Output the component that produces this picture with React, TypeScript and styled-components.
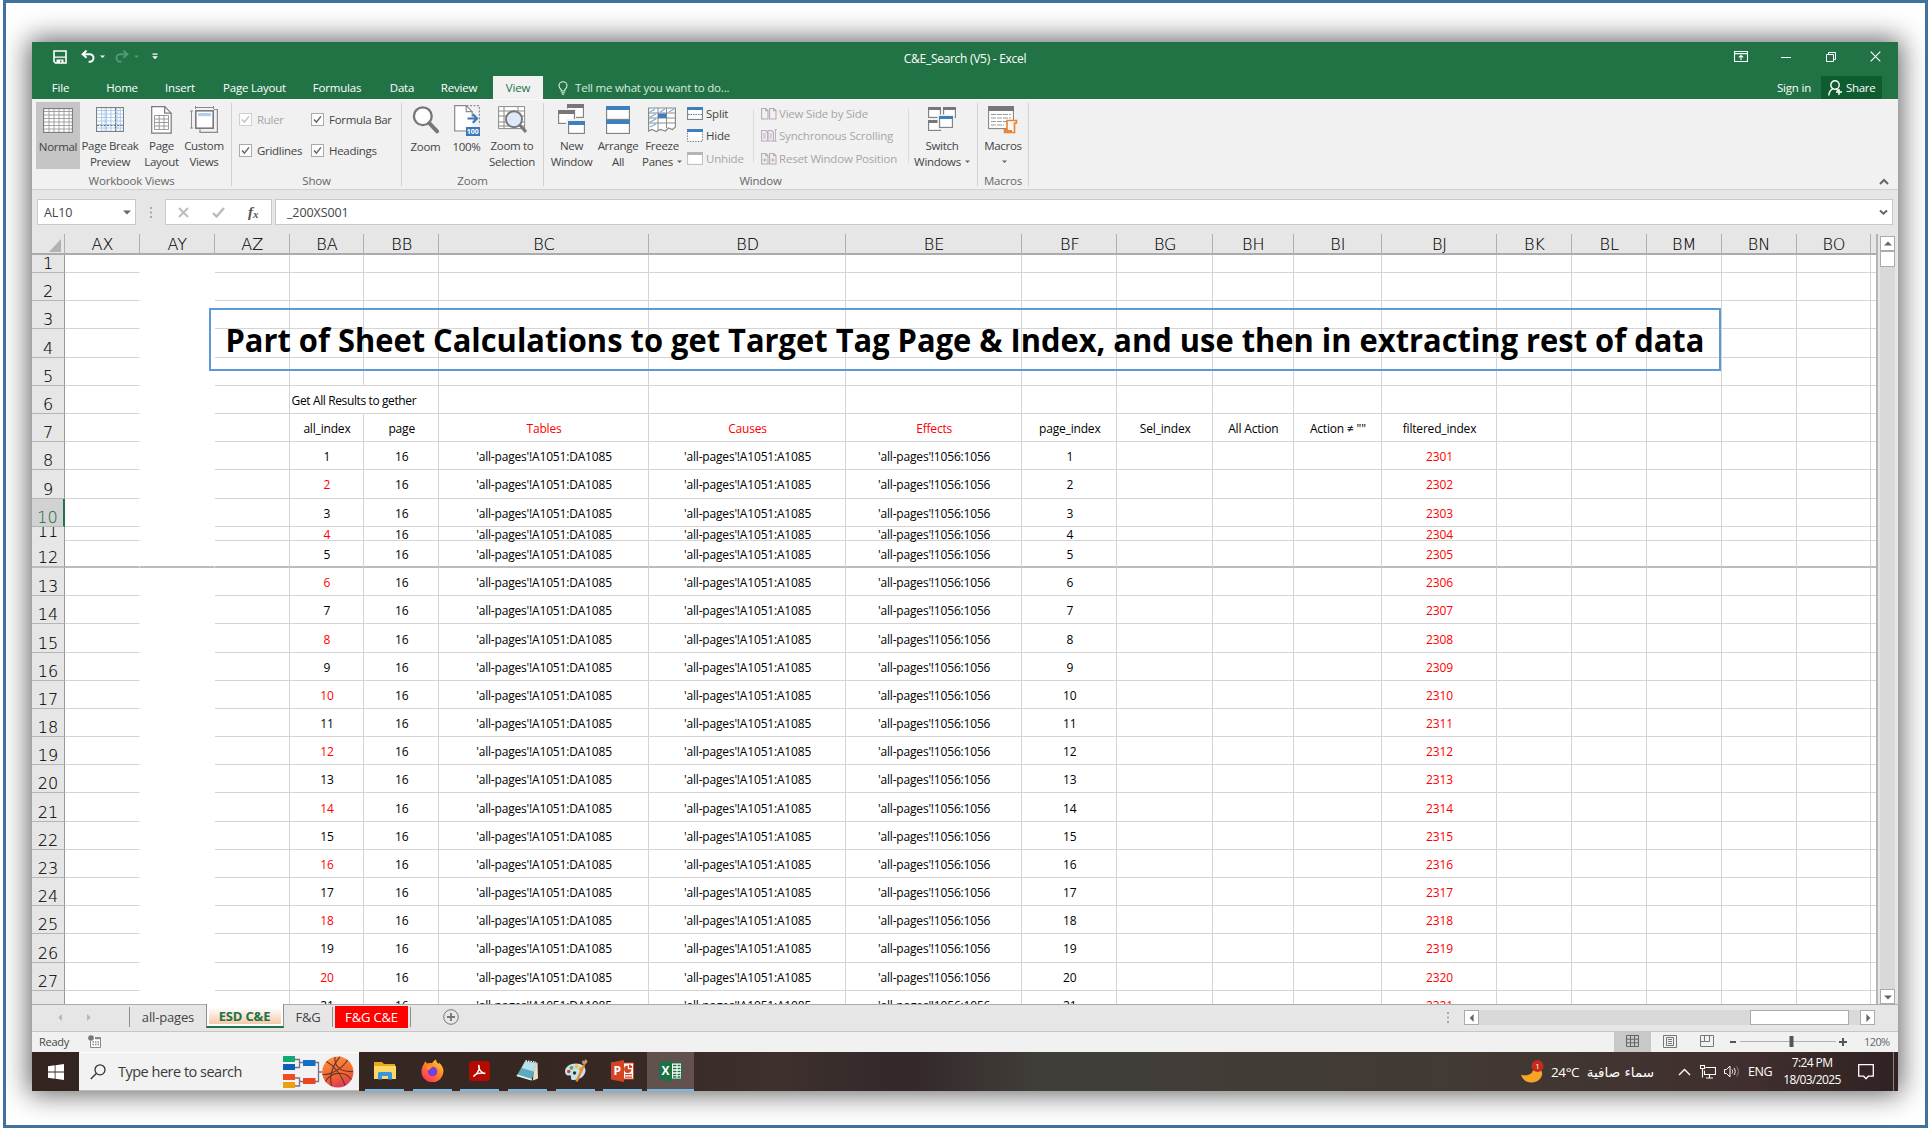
import React from 'react';
import styled, { createGlobalStyle, css } from 'styled-components';

const UI = "'Open Sans', 'Noto Sans', sans-serif";
const HEAD = "'DejaVu Sans', sans-serif";
const GREEN = '#217346';
const LINE = '#d4d4d4';

const Global = createGlobalStyle`
  * { box-sizing: border-box; }
  html, body { margin: 0; padding: 0; background: #fff; }
  body { font-family: ${UI}; overflow: hidden; }
  svg { display: block; flex: none; }
`;

const Frame = styled.div`
  width: 1925px;
  height: 1128px;
  margin-left: 3px;
  border: 3px solid #41719c;
  padding: 39px 0 0 26px;
  background: #fff;
  overflow: hidden;
`;

const Window = styled.div`
  width: 1866px;
  height: 1049px;
  display: flex;
  flex-direction: column;
  background: #e6e6e6;
  box-shadow: 0 0 26px 3px rgba(0, 0, 0, 0.62);
`;

/* ---------- title bar ---------- */

const TitleBar = styled.div`
  height: 34px;
  flex: none;
  display: grid;
  grid-template-columns: 1fr auto 1fr;
  align-items: start;
  background: ${GREEN};
  color: #fff;
`;
const QuickAccess = styled.div`
  display: flex;
  align-items: center;
  padding-left: 21px;
  height: 29px;
`;
const Gap = styled.span<{ w: number }>`
  flex: none;
  width: ${(p) => p.w}px;
`;
const DocTitle = styled.div`
  font-size: 12px;
  letter-spacing: -0.29px;
  line-height: 34px;
  white-space: nowrap;
`;
const WindowButtons = styled.div`
  display: flex;
  align-items: center;
  justify-content: flex-end;
  height: 29px;
  padding-right: 17px;
`;

/* ---------- ribbon tabs ---------- */

const TabRow = styled.div`
  height: 23px;
  flex: none;
  display: flex;
  align-items: stretch;
  background: ${GREEN};
  color: #fff;
`;
const RibbonTab = styled.div<{ w: number; $active?: boolean }>`
  width: ${(p) => p.w}px;
  text-align: center;
  font-size: 11.5px;
  letter-spacing: -0.2px;
  line-height: 23px;
  white-space: nowrap;
  ${(p) => p.$active && css`margin-left: 9px; background: #f1f1f1; color: ${GREEN};`}
`;
const TellMe = styled.div`
  display: flex;
  flex: 1;
  align-items: center;
  padding-left: 15px;
  gap: 7px;
  font-size: 11.5px;
  letter-spacing: -0.2px;
  color: #d9eadf;
`;
const SignIn = styled.div`
  font-size: 11.5px;
  letter-spacing: -0.2px;
  line-height: 23px;
  margin-right: 10px;
`;
const Share = styled.div`
  display: flex;
  align-items: center;
  gap: 3px;
  width: 61px;
  margin-right: 16px;
  padding-left: 7px;
  font-size: 11.5px;
  letter-spacing: -0.3px;
  background: #0e5c2f;
`;

/* ---------- ribbon ---------- */

const Ribbon = styled.div`
  height: 91px;
  flex: none;
  display: flex;
  padding-top: 3px;
  border-bottom: 1px solid #d2d2d2;
  border-top: 1px solid #fafafa;
  background: #f1f1f1;
  color: #444;
  font-size: 11.5px;
  letter-spacing: -0.3px;
`;
const Group = styled.div<{ w: number }>`
  width: ${(p) => p.w}px;
  height: 83px;
  display: flex;
  flex-direction: column;
  border-right: 1px solid #d2d2d2;
`;
const GroupBody = styled.div<{ pad?: number }>`
  display: flex;
  flex: 1;
  padding-left: ${(p) => p.pad || 0}px;
`;
const GroupLabel = styled.div`
  height: 14px;
  text-align: center;
  line-height: 17px;
  letter-spacing: -0.2px;
  color: #666;
`;
const BigButton = styled.div<{ w: number; $active?: boolean }>`
  width: ${(p) => p.w}px;
  height: 67px;
  margin-top: -1px;
  display: flex;
  flex-direction: column;
  align-items: center;
  background: ${(p) => (p.$active ? '#c5c5c5' : 'transparent')};
`;
const IconBox = styled.div`
  height: 37px;
  display: flex;
  align-items: center;
  padding-bottom: 1px;
`;
const BigLabel = styled.div`
  line-height: 15.4px;
  text-align: center;
  white-space: nowrap;
`;
const Checks = styled.div`
  display: grid;
  grid-template-columns: 72px auto;
  grid-template-rows: 31px 30px;
  padding: 1px 0 0 7px;
`;
const CheckItem = styled.div<{ $off?: boolean }>`
  display: flex;
  align-items: center;
  gap: 5px;
  white-space: nowrap;
  color: ${(p) => (p.$off ? '#a6a6a6' : '#444')};
`;
const CheckBox = styled.span<{ $off?: boolean }>`
  width: 13px;
  height: 13px;
  display: grid;
  place-items: center;
  border: 1px solid ${(p) => (p.$off ? '#d0d0d0' : '#ababab')};
  background: #fdfdfd;
`;
const SmallList = styled.div<{ w: number }>`
  width: ${(p) => p.w}px;
  height: 67px;
  display: grid;
  grid-template-rows: 22.5px 22.5px 22.5px;
  margin-top: -1px;
  letter-spacing: -0.2px;
`;
const SmallItem = styled.div<{ $off?: boolean; g?: number }>`
  display: flex;
  align-items: center;
  gap: ${(p) => p.g || 4}px;
  white-space: nowrap;
  color: ${(p) => (p.$off ? '#a6a6a6' : '#444')};
`;
const Divider = styled.div`
  width: 1px;
  height: 54px;
  margin-top: 6px;
  background: #dcdcdc;
`;
const Collapse = styled.div`
  flex: 1;
  display: flex;
  align-items: flex-end;
  justify-content: flex-end;
  padding: 0 9px 4px 0;
`;

/* ---------- formula bar ---------- */

const FormulaRow = styled.div`
  height: 44px;
  flex: none;
  display: flex;
  align-items: flex-start;
  padding: 9px 0 0 5px;
`;
const InputBox = styled.div<{ w: number; pad?: number }>`
  width: ${(p) => p.w}px;
  height: 26px;
  display: flex;
  align-items: center;
  justify-content: space-between;
  padding: 0 4px 0 ${(p) => p.pad || 0}px;
  border: 1px solid #c8c8c8;
  background: #fff;
  font-size: 12.5px;
  letter-spacing: -0.1px;
  color: #444;
`;
const Dots = styled.div`
  width: 29px;
  height: 26px;
  display: grid;
  place-items: center;
`;
const FxTools = styled(InputBox)`
  justify-content: flex-start;
`;
const FxLabel = styled.span`
  font: italic 700 15px 'Liberation Serif', serif;
  color: #555;
  & sub { font-size: 11px; vertical-align: -1px; }
`;

/* ---------- sheet ---------- */

const COLS = '33px 74.8px 75px 74.8px 74.7px 74.8px 209.9px 197.2px 176px 95.3px 95.5px 80.7px 88.4px 114.9px 74.9px 74.8px 75px 74.9px 74.8px 6.5px';

const SheetRow = styled.div`
  flex: 1;
  min-height: 0;
  display: flex;
`;
const Sheet = styled.div`
  position: relative;
  width: 1846px;
  overflow: hidden;
  border-right: 2px solid #b4b4b4;
  background: #fff;
`;
const HeaderRow = styled.div`
  display: grid;
  grid-template-columns: ${COLS};
  height: 21px;
  background: #e6e6e6;
  border-bottom: 2px solid #ababab;
`;
const ColHead = styled.div`
  border-right: 1px solid #b0b0b0;
  padding-left: 1px;
  text-align: center;
  font: 300 16px/21px ${HEAD};
  color: #000;
  -webkit-text-stroke: 0.12px #000;
`;
const Corner = styled.div`
  display: flex;
  justify-content: flex-end;
  align-items: flex-end;
  padding: 0 3px 3px 0;
  border-right: 1px solid #b0b0b0;
`;
const Row = styled.div<{ h: number; $frozen?: boolean }>`
  display: grid;
  grid-template-columns: ${COLS};
  height: ${(p) => p.h}px;
  ${(p) => p.$frozen && css`
    && > * { border-bottom: 2px solid #bcbcbc; }
  `}
`;
const RowHead = styled.div<{ $sel?: boolean }>`
  display: flex;
  justify-content: center;
  align-items: flex-end;
  overflow: hidden;
  border-bottom: 1px solid #b5b5b5;
  border-right: ${(p) => (p.$sel ? `2px solid ${GREEN}` : '1px solid #999')};
  background: ${(p) => (p.$sel ? '#d2d2d2' : '#e6e6e6')};
  color: ${(p) => (p.$sel ? GREEN : '#000')};
  font: 300 16px/16px ${HEAD};
  -webkit-text-stroke: 0.12px currentColor;
`;
const Cell = styled.div<{ $bare?: boolean; $noLine?: boolean; $red?: boolean; $left?: boolean }>`
  min-width: 0;
  display: flex;
  align-items: center;
  justify-content: ${(p) => (p.$left ? 'flex-start' : 'center')};
  padding: 2px 0 0 ${(p) => (p.$left ? 2 : 1)}px;
  border-right: 1px solid ${(p) => (p.$noLine ? 'transparent' : LINE)};
  border-bottom: 1px solid ${(p) => (p.$bare ? 'transparent' : LINE)};
  font-size: 12px;
  font-weight: 500;
  line-height: 11px;
  letter-spacing: ${(p) => (p.$left ? -0.38 : -0.18)}px;
  white-space: nowrap;
  color: ${(p) => (p.$red ? '#ff0000' : '#000')};
`;
const Banner = styled.div`
  position: absolute;
  left: 177px;
  top: 74px;
  width: 1512px;
  height: 63px;
  display: flex;
  align-items: center;
  justify-content: center;
  border: 2px solid #5b9bd5;
`;
const BannerText = styled.span`
  font-size: 33px;
  font-weight: 700;
  line-height: 56px;
  white-space: nowrap;
  color: #000;
  transform: scaleX(0.935);
`;

const VScroll = styled.div`
  width: 15px;
  margin: 2px 0 0 2px;
  display: flex;
  flex-direction: column;
  background: #d9d9d9;
`;
const ScrollButton = styled.div`
  width: 15px;
  height: 15px;
  flex: none;
  display: grid;
  place-items: center;
  border: 1px solid #ababab;
  background: #fff;
`;
const VThumb = styled.div`
  height: 16px;
  border: 1px solid #ababab;
  background: #fff;
`;
const Fill = styled.div`
  flex: 1;
`;

/* ---------- sheet tabs ---------- */

const TabsBar = styled.div`
  height: 28px;
  flex: none;
  display: flex;
  align-items: stretch;
  border-top: 1px solid #ababab;
  border-bottom: 1px solid #c6c6c6;
  background: #e6e6e6;
  font-size: 13px;
  color: #444;
`;
const NavArrows = styled.div`
  width: 98px;
  display: flex;
  align-items: center;
  gap: 21px;
  padding-left: 25px;
  margin: 2px 0 4px;
  border-right: 1px solid #8f8f8f;
`;
const SheetTab = styled.div<{ w: number; $kind?: 'active' | 'red' }>`
  width: ${(p) => p.w}px;
  text-align: center;
  letter-spacing: -0.15px;
  line-height: 24px;
  white-space: nowrap;
  ${(p) => p.$kind === 'active' && css`
    margin-top: -1px;
    height: 24px;
    padding-right: 1px;
    line-height: 25px;
    font-weight: 700;
    color: ${GREEN};
    background: linear-gradient(#fff 15%, #f5c3a0);
    box-shadow: inset 0 0 0 2px #fff;
    border-bottom: 2px solid ${GREEN};
    border-left: 1px solid #8f8f8f;
    border-right: 1px solid #8f8f8f;
  `}
  ${(p) => p.$kind === 'red' && css`
    height: 22px;
    margin: 1px 2px 0 2px;
    line-height: 22px;
    background: #ff0000;
    color: #fff;
  `}
`;
const TabLine = styled.span`
  width: 1px;
  height: 20px;
  margin-top: 2px;
  background: #8f8f8f;
`;
const AddSheet = styled.div`
  display: flex;
  align-items: center;
  padding: 0 0 2px 32px;
`;
const HScroll = styled.div`
  width: 411px;
  height: 15px;
  margin: 5px 23px 0 15px;
  display: flex;
  background: #d9d9d9;
`;
const HThumb = styled.div`
  width: 99px;
  border: 1px solid #ababab;
  background: #fff;
`;

/* ---------- status bar ---------- */

const StatusBar = styled.div`
  height: 20px;
  flex: none;
  display: flex;
  align-items: center;
  padding: 0 0 2px 7px;
  background: #f1f1f1;
  font-size: 11px;
  letter-spacing: -0.25px;
  color: #444;
`;
const ViewButton = styled.div<{ $active?: boolean }>`
  width: 37px;
  height: 20px;
  margin-top: 2px;
  padding-bottom: 2px;
  display: grid;
  place-items: center;
  background: ${(p) => (p.$active ? '#c8c8c8' : 'transparent')};
`;
const ZoomValue = styled.div`
  width: 34px;
  margin-left: 15px;
  color: #666;
  letter-spacing: -0.6px;
`;

/* ---------- taskbar ---------- */

const Taskbar = styled.div`
  height: 39px;
  flex: none;
  display: flex;
  align-items: stretch;
  background: linear-gradient(90deg, #34241f 0%, #382823 30%, #3d302d 40%, #33282a 47%, #413e39 54%, #423a34 76%, #402f2e 92%, #302223 100%);
  color: #fff;
`;
const Start = styled.div`
  width: 47px;
  display: grid;
  place-items: center;
`;
const SearchBox = styled.div`
  width: 280px;
  display: flex;
  align-items: center;
  padding-left: 11px;
  border-bottom: 1px solid #bbb;
  border-top: 1px solid #fff;
  background: #f2f2f2;
  color: #3a3a3a;
  font-size: 14.5px;
  letter-spacing: -0.5px;
  white-space: nowrap;
`;
const SearchText = styled.span`
  width: 177px;
  flex: none;
  padding-left: 12px;
`;
const TaskButton = styled.div<{ $on?: boolean; w: number; ml: number }>`
  width: ${(p) => p.w}px;
  margin-left: ${(p) => p.ml}px;
  display: grid;
  place-items: center;
  border-bottom: 2px solid #76b9ed;
  background: ${(p) => (p.$on ? '#63514d' : 'transparent')};
`;
const Tray = styled.div`
  flex: 1;
  display: flex;
  align-items: center;
  justify-content: flex-end;
  font-size: 13px;
  letter-spacing: -0.4px;
  white-space: nowrap;
`;
const Temp = styled.span`
  width: 38px;
  padding-left: 7px;
  font-size: 13.5px;
`;
const Weather = styled.span`
  width: 66px;
  margin: 0 24px 0 0;
  font: 500 13.5px 'DejaVu Sans', sans-serif;
  letter-spacing: 0;
  text-align: right;
`;
const Lang = styled.span`
  width: 24px;
  margin: 0 11px 0 8px;
  font-size: 12.5px;
`;
const Clock = styled.div`
  width: 58px;
  margin: 0 17px 1px 0;
  text-align: center;
  font-size: 12px;
  letter-spacing: -0.6px;
  line-height: 17px;
`;
const PeekLine = styled.div`
  width: 1px;
  align-self: stretch;
  margin-right: 4px;
  margin-left: 19px;
  background: #8b8080;
`;

/* ---------- icons ---------- */

const Arrow = ({ c = '#666', s = 6, d = 'down' }: { c?: string; s?: number; d?: string }) => {
  const pts: Record<string, string> = { down: '0,3 10,3 5,8', up: '0,7 10,7 5,2', left: '7,0 7,10 2,5', right: '3,0 3,10 8,5' };
  return <svg width={s} height={s} viewBox="0 0 10 10"><polygon points={pts[d]} fill={c} /></svg>;
};
const InlineArrow = styled.span`
  display: inline-block;
  margin-left: 4px;
  vertical-align: 2px;
`;
const Mirror = styled.span`
  transform: scaleX(-1);
`;

const SaveIcon = () => (
  <svg width="14" height="14" viewBox="0 0 14 14"><path d="M1 1h12v12H2.5L1 11.5z" fill="none" stroke="#fff" strokeWidth="1.6" /><path d="M1 6.5h12v1.3H1zM3.5 9.5h7V13h-2v-2.2H7V13H3.5z" fill="#fff" /></svg>
);
const UndoIcon = ({ c }: { c: string }) => (
  <svg width="14" height="13" viewBox="0 0 14 13">
    <path d="M1.5 4.2h7.2a3.8 3.8 0 0 1 0 7.6H7.6M5.6 .6 1.6 4.2l4 3.6" fill="none" stroke={c} strokeWidth="2" />
  </svg>
);
const CustomizeIcon = () => (
  <svg width="6" height="7" viewBox="0 0 6 7"><path d="M.5 .5h5v1.2h-5zM.2 3.3h5.6L3 6.3z" fill="#fff" /></svg>
);
const RibbonOptIcon = () => (
  <svg width="14" height="11" viewBox="0 0 14 11" fill="none" stroke="#fff"><path d="M.5 .5h13v10H.5zM.5 2.6h13M7 9V4.4M4.8 6.4 7 4.4l2.2 2" strokeWidth="1.1" /></svg>
);
const MinIcon = () => <svg width="10" height="10" viewBox="0 0 10 10"><path d="M0 5.5h10" stroke="#fff" /></svg>;
const RestoreIcon = () => (
  <svg width="10" height="10" viewBox="0 0 10 10" fill="none" stroke="#fff"><path d="M.5 2.5h7v7h-7zM2.5 2.5v-2h7v7h-2" /></svg>
);
const CloseIcon = () => <svg width="11" height="11" viewBox="0 0 11 11"><path d="M.7 .7l9.6 9.6M10.3 .7.7 10.3" stroke="#fff" strokeWidth="1.1" /></svg>;
const BulbIcon = () => (
  <svg width="10" height="14" viewBox="0 0 10 14" fill="none" stroke="#e4f0e8"><path d="M3.2 10V8.6C2 7.6 1 6.5 1 4.8a4 4 0 0 1 8 0c0 1.7-1 2.8-2.2 3.8V10zM3.2 11.8h3.6M3.8 13.3h2.4" strokeWidth="1.1" /></svg>
);
const PersonIcon = () => (
  <svg width="15" height="16" viewBox="0 0 15 16" fill="none" stroke="#fff" strokeWidth="1.4"><circle cx="7" cy="5" r="4.2" /><path d="M.8 15.5c.2-3.6 1.9-5.8 4.2-6.9M8 8.8l2.2 2M11 9v6M8 12h6" /></svg>
);

const GridIcon = ({ blue }: { blue?: boolean }) => {
  const v = [6, 11, 16, 21, 26];
  const h = [3.5, 7, 10.5, 14, 17.5, 21];
  return (
    <svg width={blue ? 28 : 30} height="25" viewBox="0 0 30 25" preserveAspectRatio="none">
      <rect x=".6" y=".6" width="28.8" height="23.8" fill="#fff" stroke="#7a7a7a" strokeWidth="1.1" />
      {blue && <path d="M8 1h4v23H8zM20 1h4v23h-4z" fill="#dbe8f7" />}
      {v.map((x) => <path key={x} d={`M${x} 1v23`} stroke={blue ? '#9dbfe6' : '#9a9a9a'} strokeWidth=".9" />)}
      {h.map((y) => <path key={y} d={`M1 ${y}h28`} stroke={blue ? '#a9c5e6' : '#9a9a9a'} strokeWidth=".9" />)}
      {blue && <path d="M1 18.5h28M21 1v23" stroke="#6b7685" strokeWidth="1.2" strokeDasharray="2.4 1.2" />}
    </svg>
  );
};
const PageLayoutIcon = () => (
  <svg width="21" height="28" viewBox="0 0 21 28">
    <path d="M.7 .7h13l6.5 6.5v20H.7z" fill="#fff" stroke="#7a7a7a" strokeWidth="1.2" />
    <path d="M13.7 .7v6.5h6.5" fill="none" stroke="#7a7a7a" strokeWidth="1.2" />
    <path d="M3.5 9.5h14v14h-14zM3.5 13h14M3.5 16.5h14M3.5 20h14M8.2 9.5v14M13 9.5v14" fill="none" stroke="#9a9a9a" />
  </svg>
);
const CustomViewsIcon = () => (
  <svg width="28" height="27" viewBox="0 0 28 27" fill="none" stroke="#8a8a8a">
    <path d="M5.5 1.5h18M5.5 0v3M23.5 0v3M1.5 5v17M0 5h3M0 22h3" />
    <path d="M24 3.5h3.4v22.8H10v-3" strokeWidth="1.2" />
    <rect x="5.8" y="4.8" width="17.4" height="17.4" fill="#fff" strokeWidth="1.6" stroke="#7a7a7a" />
    <path d="M8 7h13v3.2H8z" fill="#b4cdea" stroke="none" />
  </svg>
);
const MagnifierIcon = () => (
  <svg width="27" height="28" viewBox="0 0 27 28"><circle cx="10.8" cy="10.2" r="8.9" fill="#fdfdfd" stroke="#777" strokeWidth="2.3" /><path d="M17.3 17.2l7.8 8.2" stroke="#777" strokeWidth="4" strokeLinecap="round" /></svg>
);
const Text100 = styled.text`
  font: 700 7px ${UI};
  letter-spacing: 0;
  fill: #fff;
`;
const Zoom100Icon = () => (
  <svg width="26" height="31" viewBox="0 0 26 31">
    <path d="M.7 .7h11.5l6 6v18.5H.7z" fill="#fff" />
    <path d="M12 26H.7V.7h11.5v6h6" fill="none" stroke="#8a8a8a" strokeWidth="1.2" />
    <path d="M12.5 .7h12.8v19" fill="none" stroke="#777" strokeDasharray="2 1.5" />
    <path d="M12.2 .7l6 6v5" fill="none" stroke="#8a8a8a" strokeWidth="1.2" />
    <path d="M13.5 13.5h9M18.8 9.3l4.2 4.2-4.2 4.2" fill="none" stroke="#3b78b8" strokeWidth="2.2" />
    <rect x="12" y="22" width="14" height="9" fill="#3b78b8" />
    <Text100 x="12.8" y="29.2">100</Text100>
  </svg>
);
const ZoomSelIcon = () => (
  <svg width="29" height="28" viewBox="0 0 29 28">
    <path d="M.6 .6h26v22h-26zM.6 5h26M.6 10h26M.6 16h26M.6 20h26M6 .6v22M20 .6v5" fill="#fff" stroke="#8a8a8a" />
    <circle cx="16" cy="13.2" r="8" fill="#dce9f8" stroke="#777" strokeWidth="1.9" />
    <path d="M22 19.2l6 6.8" stroke="#777" strokeWidth="3" />
  </svg>
);
const Pane = ({ x, y, w, h, c = '#777', bar = 3 }: { x: number; y: number; w: number; h: number; c?: string; bar?: number }) => (
  <g><rect x={x + 0.6} y={y + 0.6} width={w - 1.2} height={h - 1.2} fill="#fff" stroke="#7d7d7d" strokeWidth="1.1" /><rect x={x} y={y} width={w} height={bar} fill={c} /></g>
);
const NewWindowIcon = () => (
  <svg width="27" height="31" viewBox="0 0 27 31"><Pane x={9} y={0} w={17} h={14} bar={4} /><rect x="-1" y="4.5" width="19" height="17" fill="#f1f1f1" /><Pane x={0} y={6} w={17} h={14} bar={4} /><rect x="8" y="15" width="19" height="16" fill="#f1f1f1" /><Pane x={10} y={17} w={17} h={13} c="#3f7fbf" bar={4} /></svg>
);
const ArrangeIcon = () => (
  <svg width="24" height="28" viewBox="0 0 24 28"><Pane x={0} y={0} w={24} h={14} c="#3f7fbf" bar={4} /><Pane x={0} y={14} w={24} h={14} c="#3f7fbf" bar={4} /></svg>
);
const FreezeIcon = () => (
  <svg width="28" height="26" viewBox="0 0 28 26" fill="none" stroke="#8a8a8a">
    <path d="M.6 1h26.8v19l-3 2.5-4-1.5-3 3-5-1.5-4 2L4 22.5.6 24z" fill="#fff" strokeWidth="1.2" />
    <path d="M.6 6h26.8M.6 11h26.8M.6 16h26.8M10 1v22M18.5 1v20" />
    <path d="M2 5l5-3M12 5l5-3M21 5l5-3M2 10l6-3M2 15l6-3M2 20l6-3" stroke="#7fa9db" strokeWidth="1.2" />
    <rect x="10" y="6.5" width="8.5" height="4.5" fill="#3f7fbf" stroke="none" />
  </svg>
);
const SmallPane = ({ kind }: { kind: 'split' | 'hide' | 'unhide' }) => (
  <svg width="16" height="13" viewBox="0 0 16 13">
    <rect x=".6" y=".6" width="14.8" height="11.8" fill="#fff" stroke={kind === 'unhide' ? '#bdbdbd' : '#777'} strokeDasharray={kind === 'hide' ? '1.5 1.2' : undefined} />
    <rect width="16" height="3" fill={kind === 'unhide' ? '#b5b5b5' : '#3f7fbf'} />
    {kind === 'split' && <path d="M1 7.5h14" stroke="#3f7fbf" strokeDasharray="1.5 1" />}
  </svg>
);
const PagesIcon = ({ kind }: { kind: number }) => (
  <svg width="16" height="13" viewBox="0 0 16 13" fill="none" stroke="#b9a9b9">
    <path d={kind === 1 ? 'M.6 1.5h4l2 2V12h-6zM7 1.5h3.500l2 2V12H7z' : 'M.6 1.5h4l2.4 2V12H.6zM8.6 1.5h4l2.4 2V12H8.6zM4.6 1.5v2.2H7M12.6 1.5v2.2H15'} strokeWidth="1.1" />
    {kind === 1 && <path d="M2 5h3M2 7h3M2 9h3M8.500 5h2.500M8.500 7h2.500M8.500 9h2.500M14.5 1v11M13 .8h3M13 12.200h3" strokeWidth=".9" />}
    {kind === 2 && <path d="M2 8h3.6M3.8 6.2v3.6M10 8h3.6M11.8 6.2v3.6" />}
  </svg>
);
const SwitchIcon = () => (
  <svg width="28" height="26" viewBox="0 0 28 26"><Pane x={0} y={0} w={13} h={11} /><Pane x={15} y={0} w={13} h={11} /><Pane x={0} y={13} w={13} h={11} /><rect x="9.5" y="7.5" width="17" height="15" fill="#f1f1f1" /><Pane x={11} y={9} w={14} h={12} c="#3f7fbf" /></svg>
);
const MacrosIcon = () => (
  <svg width="30" height="28" viewBox="0 0 30 28">
    <rect x=".6" y=".6" width="24.8" height="22" fill="#fff" stroke="#7d7d7d" /><rect width="26" height="5" fill="#777" />
    <path d="M3 8.5h20M3 12h20M3 15.5h16M3 19h13" stroke="#9a9a9a" strokeDasharray="5 1" />
    <path d="M19 14.5h9.5v2.5h-2v9.5H16.5v-3H19z" fill="#fff7ee" stroke="#e8833a" strokeWidth="1.6" />
    <path d="M16 24h8v3h-8z" fill="#e8833a" />
  </svg>
);
const Tick = ({ c }: { c: string }) => <svg width="9" height="9" viewBox="0 0 9 9"><path d="M1 4.5l2.4 2.6L8 1.4" fill="none" stroke={c} strokeWidth="1.5" /></svg>;
const DotsIcon = () => <svg width="2" height="11" viewBox="0 0 2 11"><path d="M0 0h2v2H0zM0 4.5h2v2H0zM0 9h2v2H0z" fill="#aaa" /></svg>;

const StatusViews = [
  <svg key="a" width="13" height="12" viewBox="0 0 13 12" fill="none" stroke="#666"><path d="M.5 .5h12v11H.5zM.5 4.2h12M.5 7.8h12M4.5 .5v11M8.5 .5v11" /></svg>,
  <svg key="b" width="14" height="13" viewBox="0 0 14 13" fill="none" stroke="#777"><path d="M.5 .5h13v12H.5zM3.5 2.5h7v8h-7zM5 4.5h4M5 6.5h4M5 8.5h4" /></svg>,
  <svg key="c" width="14" height="12" viewBox="0 0 14 12" fill="none" stroke="#777"><path d="M.5 .5h13v11H.5zM4.5 .5v6h-4M9.5 .5v6h-5" /></svg>,
];

const SearchArt = () => (
  <svg width="72" height="34" viewBox="0 0 72 34">
    <defs><linearGradient id="ball" x1=".3" y1="0" x2=".6" y2="1"><stop offset="0" stopColor="#fd8f3f" /><stop offset=".6" stopColor="#f2662c" /><stop offset="1" stopColor="#d9365c" /></linearGradient></defs>
    <path d="M12 4.500h4.500v8H12M16.500 7.500H20M12 23h4.500v8H12M16.500 26.500H20M32 7.500h3.500v19H32M35.500 17h4" fill="none" stroke="#7b6f88" strokeWidth="1.3" />
    <path d="M0 1h12v6H0z" fill="#12a877" /><path d="M0 9h12v6H0z" fill="#0f5fb8" /><path d="M20 5h12.500v6H20z" fill="#1170c4" />
    <path d="M0 19h12v6H0z" fill="#ee4e22" /><path d="M0 27h12v6H0z" fill="#eda00f" /><path d="M20 23h12.500v6H20z" fill="#ee4322" />
    <circle cx="54.800" cy="17" r="15.600" fill="url(#ball)" />
    <path d="M43.500 6.500C50 10 59 20 62 30.500M39.500 19.500C48 20 60 13 64.500 5M52 2c-1 8 4 15.500 18 14.500M42.500 26.500C48 17 61 15 68.500 24.500M48.500 31c-2-8 0-19 8.500-29.300" fill="none" stroke="#6b3430" strokeWidth="1.1" />
  </svg>
);
const ExplorerIcon = () => (
  <svg width="22" height="18" viewBox="0 0 22 18"><path d="M0 0h8l2 2h11v15H0z" fill="#e8a71e" /><path d="M0 4h22v13H0z" fill="#fdd663" /><path d="M4 17.500v-6a1.500 1.500 0 0 1 1.500-1.500h11a1.500 1.500 0 0 1 1.500 1.500v6h-4V14H8v3.500z" fill="#3695e0" /></svg>
);
const FirefoxIcon = () => (
  <svg width="23" height="23" viewBox="0 0 23 23">
    <defs><linearGradient id="ff" x1="1" y1="0" x2=".2" y2="1"><stop offset="0" stopColor="#ffe14a" /><stop offset=".45" stopColor="#ff8a1f" /><stop offset="1" stopColor="#ff2d62" /></linearGradient></defs>
    <path d="M3 5c.4-1.400 1-2.200 1.600-2.800.2 1 .6 1.700 1.400 2.200 1.500-.6 3.400-.7 5-.2C12 2.700 13.400 1 15 .4c0 2 1.200 3 2.700 4.600.3-.6.3-1 .2-1.600 3 2.600 4.600 5.700 4.600 8.800A11 11 0 0 1 .5 12.500C.5 9.500 1.500 7 3 5z" fill="url(#ff)" />
    <circle cx="11.500" cy="12.500" r="4.800" fill="#7a3fd8" />
    <path d="M5 8c2-1.500 5-1.200 6.500.5-2 .2-2.800 1.200-2.700 2.500-2 0-3.500-1-3.800-3z" fill="#ff9a2b" />
  </svg>
);
const AcrobatIcon = () => (
  <svg width="21" height="20" viewBox="0 0 21 20"><rect width="21" height="20" rx="3.500" fill="#b30b00" /><path d="M4.800 15.200c1-2 5.200-3.800 11-3M9.800 4.500c1.500 2.500-1 8-4.600 10.500M9.800 4.800c-.6 3 2.300 6.800 5.600 7.600" fill="none" stroke="#fff" strokeWidth="1.500" strokeLinecap="round" /></svg>
);
const NotepadIcon = () => (
  <svg width="23" height="22" viewBox="0 0 23 22"><path d="M18 3l3.500-.5.500 16-5 2z" fill="#e9dfc2" /><path d="M9 1.500 20.500 3 15.500 20.500 .5 16z" fill="#5fa9bd" /><path d="M9 1.500 20.500 3 18 11.500 5.500 8z" fill="#b9e1ea" /><path d="M.5 16l15 4.500.4-1.500L1.300 14.500z" fill="#e8f5f8" /><path d="M9.500 .9 20 2.200" stroke="#f2f2f2" strokeWidth="1.600" strokeDasharray="1.500 1" /></svg>
);
const PaintIcon = () => (
  <svg width="24" height="23" viewBox="0 0 24 23"><path d="M1 12.500C1 8 6 4.500 12 4.500c6 0 9.500 3 9.500 7C21.500 16.500 16 21 10 21c-2.500 0-3.500-1-3-2.600.4-1.400-.4-2.200-2-2C2.500 16.800 1 15 1 12.500z" fill="#c4e2f0" /><circle cx="7.500" cy="8.800" r="1.900" fill="#58a845" /><circle cx="12.500" cy="7.500" r="1.900" fill="#f3c53c" /><circle cx="4.800" cy="12.500" r="1.700" fill="#d83a2c" /><circle cx="16.500" cy="10" r="1.800" fill="#f2a11c" /><circle cx="10.500" cy="14" r="1.700" fill="#333" /><path d="M12.500 22.500 20 6" stroke="#e88b2a" strokeWidth="2.300" /><path d="M18.500 5 18 1.500 20.500 2 21.500 0l2.200 2.500L21 6z" fill="#c79a62" /></svg>
);
const OfficeLetter = styled.text`
  font: 700 12px ${UI};
  letter-spacing: 0;
  fill: #fff;
`;
const OfficeIcon = ({ letter, c }: { letter: string; c: string }) => (
  <svg width="23" height="22" viewBox="0 0 23 22">
    <rect x="12" y="3" width="10.500" height="16" fill="#fff" stroke={c} />
    {letter === 'P' ? <g fill={c}><path d="M16.800 5.500v3.700h3.700a3.700 3.700 0 1 1-3.700-3.700z" /><path d="M18 4.500a3.500 3.500 0 0 1 3.300 3.400H18zM14 14h7v1.300h-7zM14 16.500h7v1.200h-7z" /></g> : <path d="M14 5.500h3.500M18.500 5.500h3M14 8.500h3.500M18.500 8.500h3M14 11.500h3.500M18.500 11.500h3M14 14.500h3.500M18.500 14.500h3M14 17h3.500M18.500 17h3" stroke={c} strokeWidth="1.300" />}
    <path d="M0 2.500 13 0v22L0 19.500z" fill={c} />
    <OfficeLetter x="2.600" y="15.400">{letter}</OfficeLetter>
  </svg>
);
const BadgeText = styled.text`
  font: 8px ${UI};
  fill: #fff;
`;
const MoonIcon = () => (
  <svg width="23" height="23" viewBox="0 0 23 23"><path d="M0 14.500c3 1.500 8 1 10.500-1.500 1.500-1.500 2-3.500 1.500-6.500 6 0 10 4 9 8.500-1.200 5-6 7.500-11 7.500-5 0-8.500-3-10-8z" fill="#f7a428" /><circle cx="16.500" cy="6" r="6" fill="#c42b1c" /><BadgeText x="14.200" y="9">1</BadgeText></svg>
);

/* ---------- data ---------- */

const TABS: [string, number][] = [['File', 57], ['Home', 66], ['Insert', 50], ['Page Layout', 99], ['Formulas', 66], ['Data', 64], ['Review', 50]];
const LETTERS = ['AX', 'AY', 'AZ', 'BA', 'BB', 'BC', 'BD', 'BE', 'BF', 'BG', 'BH', 'BI', 'BJ', 'BK', 'BL', 'BM', 'BN', 'BO', ''];
const HEIGHTS = [18.1, 28.1, 28.1, 28.5, 28.2, 28.2, 27.9, 28.1, 28.4, 28.2, 13.2, 28.2];
const TITLES: Record<string, string> = { BA: 'all_index', BB: 'page', BC: 'Tables', BD: 'Causes', BE: 'Effects', BF: 'page_index', BG: 'Sel_index', BH: 'All Action', BI: 'Action ≠ ""', BJ: 'filtered_index' };

function cellText(row: number, col: string): string {
  if (row === 6 && col === 'BA') return 'Get All Results to gether';
  if (row === 7) return TITLES[col] || '';
  if (row < 8) return '';
  const n = row - 7;
  switch (col) {
    case 'BA': return String(n);
    case 'BB': return '16';
    case 'BC': return "'all-pages'!A1051:DA1085";
    case 'BD': return "'all-pages'!A1051:A1085";
    case 'BE': return "'all-pages'!1056:1056";
    case 'BF': return String(n);
    case 'BJ': return String(2300 + n);
    default: return '';
  }
}
function isRed(row: number, col: string): boolean {
  if (row === 7) return ['BC', 'BD', 'BE'].includes(col);
  return col === 'BJ' || (col === 'BA' && row > 7 && (row - 7) % 2 === 0);
}

const GridRow = ({ n }: { n: number }) => (
  <Row h={HEIGHTS[n - 1] || 28.18} $frozen={n === 12}>
    <RowHead $sel={n === 10}>{n < 28 ? n : ''}</RowHead>
    {LETTERS.map((c) => (
      <Cell
        key={c}
        $bare={c === 'AY'}
        $noLine={c === 'AX' || c === 'AY' || (n === 6 && c === 'BA')}
        $left={n === 6}
        $red={isRed(n, c)}
      >
        {cellText(n, c)}
      </Cell>
    ))}
  </Row>
);

const Big = ({ w, icon, lines, active, arrow }: { w: number; icon: React.ReactNode; lines: string[]; active?: boolean; arrow?: boolean }) => (
  <BigButton w={w} $active={active}>
    <IconBox>{icon}</IconBox>
    <BigLabel>
      {lines.map((l, i) => (
        <div key={i}>{l}{arrow && i === lines.length - 1 && <InlineArrow><Arrow s={5} /></InlineArrow>}</div>
      ))}
    </BigLabel>
  </BigButton>
);

const Check = ({ label, off }: { label: string; off?: boolean }) => (
  <CheckItem $off={off}><CheckBox $off={off}><Tick c={off ? '#c4c4c4' : '#666'} /></CheckBox>{label}</CheckItem>
);

export default function App() {
  return (
    <>
      <Global />
      <Frame>
        <Window>
          <TitleBar>
            <QuickAccess>
              <SaveIcon /><Gap w={14} /><UndoIcon c="#fff" /><Gap w={5} /><Arrow c="#fff" s={5} /><Gap w={10} />
              <Mirror><UndoIcon c="#4f9a70" /></Mirror><Gap w={5} /><Arrow c="#4f9a70" s={5} /><Gap w={13} /><CustomizeIcon />
            </QuickAccess>
            <DocTitle>C&amp;E_Search (V5) - Excel</DocTitle>
            <WindowButtons>
              <RibbonOptIcon /><Gap w={33} /><MinIcon /><Gap w={35} /><RestoreIcon /><Gap w={34} /><CloseIcon />
            </WindowButtons>
          </TitleBar>

          <TabRow>
            {TABS.map(([t, w]) => <RibbonTab key={t} w={w}>{t}</RibbonTab>)}
            <RibbonTab w={50} $active>View</RibbonTab>
            <TellMe><BulbIcon />Tell me what you want to do...</TellMe>
            <SignIn>Sign in</SignIn>
            <Share><PersonIcon />Share</Share>
          </TabRow>

          <Ribbon>
            <Group w={200}>
              <GroupBody pad={4}>
                <Big w={44} active icon={<GridIcon />} lines={['Normal']} />
                <Big w={60} icon={<GridIcon blue />} lines={['Page Break', 'Preview']} />
                <Big w={43} icon={<PageLayoutIcon />} lines={['Page', 'Layout']} />
                <Big w={42} icon={<CustomViewsIcon />} lines={['Custom', 'Views']} />
              </GroupBody>
              <GroupLabel>Workbook Views</GroupLabel>
            </Group>
            <Group w={170}>
              <GroupBody>
                <Checks>
                  <Check label="Ruler" off /><Check label="Formula Bar" />
                  <Check label="Gridlines" /><Check label="Headings" />
                </Checks>
              </GroupBody>
              <GroupLabel>Show</GroupLabel>
            </Group>
            <Group w={142}>
              <GroupBody pad={6}>
                <Big w={35} icon={<MagnifierIcon />} lines={['Zoom']} />
                <Big w={47} icon={<Zoom100Icon />} lines={['100%']} />
                <Big w={44} icon={<ZoomSelIcon />} lines={['Zoom to', 'Selection']} />
              </GroupBody>
              <GroupLabel>Zoom</GroupLabel>
            </Group>
            <Group w={434}>
              <GroupBody>
                <Big w={55} icon={<NewWindowIcon />} lines={['New', 'Window']} />
                <Big w={38} icon={<ArrangeIcon />} lines={['Arrange', 'All']} />
                <Big w={50} icon={<FreezeIcon />} lines={['Freeze', 'Panes']} arrow />
                <SmallList w={66}>
                  <SmallItem g={3}><SmallPane kind="split" />Split</SmallItem>
                  <SmallItem g={3}><SmallPane kind="hide" />Hide</SmallItem>
                  <SmallItem $off g={3}><SmallPane kind="unhide" />Unhide</SmallItem>
                </SmallList>
                <Divider />
                <Gap w={7} />
                <SmallList w={147}>
                  <SmallItem $off g={2}><PagesIcon kind={0} />View Side by Side</SmallItem>
                  <SmallItem $off g={2}><PagesIcon kind={1} />Synchronous Scrolling</SmallItem>
                  <SmallItem $off g={2}><PagesIcon kind={2} />Reset Window Position</SmallItem>
                </SmallList>
                <Divider />
                <Big w={66} icon={<SwitchIcon />} lines={['Switch', 'Windows']} arrow />
              </GroupBody>
              <GroupLabel>Window</GroupLabel>
            </Group>
            <Group w={51}>
              <GroupBody>
                <Big w={50} icon={<MacrosIcon />} lines={['Macros', '']} arrow />
              </GroupBody>
              <GroupLabel>Macros</GroupLabel>
            </Group>
            <Collapse><svg width="10" height="7" viewBox="0 0 10 7"><path d="M1 6l4-4 4 4" fill="none" stroke="#666" strokeWidth="2" /></svg></Collapse>
          </Ribbon>

          <FormulaRow>
            <InputBox w={99} pad={6}>AL10<Arrow s={8} /></InputBox>
            <Dots><DotsIcon /></Dots>
            <FxTools w={107} pad={12}>
              <svg width="11" height="11" viewBox="0 0 11 11"><path d="M1 1l9 9M10 1l-9 9" stroke="#bbb" strokeWidth="1.8" /></svg>
              <Gap w={23} />
              <svg width="13" height="11" viewBox="0 0 13 11"><path d="M1 6l3.5 3.5L12 1" fill="none" stroke="#bbb" strokeWidth="2.4" /></svg>
              <Gap w={23} />
              <FxLabel>f<sub>x</sub></FxLabel>
            </FxTools>
            <Gap w={3} />
            <InputBox w={1618} pad={11}>_200XS001<svg width="9" height="7" viewBox="0 0 9 7"><path d="M1 1.5l3.5 3.2L8 1.5" fill="none" stroke="#666" strokeWidth="2" /></svg></InputBox>
          </FormulaRow>

          <SheetRow>
            <Sheet>
              <HeaderRow>
                <Corner><svg width="12" height="13" viewBox="0 0 12 13"><path d="M12 0v13H0z" fill="#b2b2b2" /></svg></Corner>
                {LETTERS.map((c) => <ColHead key={c}>{c}</ColHead>)}
              </HeaderRow>
              {Array.from({ length: 28 }, (_, i) => <GridRow key={i} n={i + 1} />)}
              <Banner>
                <BannerText>Part of Sheet Calculations to get Target Tag Page &amp; Index, and use then in extracting rest of data</BannerText>
              </Banner>
            </Sheet>
            <VScroll>
              <ScrollButton><Arrow d="up" s={8} /></ScrollButton>
              <VThumb />
              <Fill />
              <ScrollButton><Arrow s={8} /></ScrollButton>
            </VScroll>
          </SheetRow>

          <TabsBar>
            <NavArrows><Arrow d="left" c="#b5b5b5" s={7} /><Arrow d="right" c="#b5b5b5" s={7} /></NavArrows>
            <SheetTab w={76}>all-pages</SheetTab>
            <SheetTab w={78} $kind="active">ESD C&amp;E</SheetTab>
            <SheetTab w={48}>F&amp;G</SheetTab>
            <TabLine />
            <SheetTab w={73} $kind="red">F&amp;G C&amp;E</SheetTab>
            <TabLine />
            <AddSheet><svg width="16" height="16" viewBox="0 0 16 16" fill="none" stroke="#777"><circle cx="8" cy="8" r="7.3" /><path d="M8 4v8M4 8h8" strokeWidth="1.8" /></svg></AddSheet>
            <Fill />
            <AddSheet><DotsIcon /></AddSheet>
            <HScroll>
              <ScrollButton><Arrow d="left" s={8} /></ScrollButton>
              <Fill />
              <HThumb />
              <Gap w={11} />
              <ScrollButton><Arrow d="right" s={8} /></ScrollButton>
            </HScroll>
          </TabsBar>

          <StatusBar>
            Ready<Gap w={19} />
            <svg width="13" height="13" viewBox="0 0 13 13"><path d="M2.5 6v6.5h10v-10H7" fill="#fff" stroke="#888" /><circle cx="3" cy="3" r="2.8" fill="#777" /><path d="M7 3.5h5M4.5 7h1.5M7 7h1.5M9.5 7H11M4.5 9.5h1.5M7 9.5h1.5M9.5 9.5H11" stroke="#888" strokeWidth="1.3" /></svg>
            <Fill />
            {StatusViews.map((v, i) => <ViewButton key={i} $active={i === 0}>{v}</ViewButton>)}
            <Gap w={4} />
            <svg width="120" height="13" viewBox="0 0 120 13"><path d="M1 7h6M110 7h8M114 3v8" stroke="#555" strokeWidth="2" /><path d="M11 6.500h96" stroke="#b0b0b0" /><path d="M60.500 1h4v11h-4z" fill="#555" /></svg>
            <ZoomValue>120%</ZoomValue>
          </StatusBar>

          <Taskbar>
            <Start><svg width="16" height="16" viewBox="0 0 16 16"><path d="M0 2.300 6.700 1.300v6.300H0zM7.500 1.200 16 0v7.600H7.500zM0 8.400h6.700v6.300L0 13.700zM7.500 8.400H16V16l-8.500-1.200z" fill="#fff" /></svg></Start>
            <SearchBox>
              <svg width="16" height="16" viewBox="0 0 16 16" fill="none" stroke="#333" strokeWidth="1.3"><circle cx="10" cy="5.8" r="5" /><path d="M6.3 9.5.8 15" /></svg>
              <SearchText>Type here to search</SearchText>
              <SearchArt />
            </SearchBox>
            <TaskButton w={39} ml={6}><ExplorerIcon /></TaskButton>
            <TaskButton w={39} ml={9}><FirefoxIcon /></TaskButton>
            <TaskButton w={39} ml={8}><AcrobatIcon /></TaskButton>
            <TaskButton w={39} ml={9}><NotepadIcon /></TaskButton>
            <TaskButton w={39} ml={9}><PaintIcon /></TaskButton>
            <TaskButton w={39} ml={8}><OfficeIcon letter="P" c="#d24625" /></TaskButton>
            <TaskButton w={47} ml={5} $on><OfficeIcon letter="X" c="#1e7145" /></TaskButton>
            <Tray>
              <MoonIcon />
              <Temp>24°C</Temp>
              <Gap w={6} />
              <Weather dir="rtl">سماء صافية</Weather>
              <svg width="13" height="8" viewBox="0 0 13 8"><path d="M1 7l5.500-5.500L12 7" fill="none" stroke="#fff" strokeWidth="1.4" /></svg>
              <Gap w={9} />
              <svg width="16" height="14" viewBox="0 0 16 14" fill="none" stroke="#fff"><path d="M5.5 2.5h10v7h-11v-4M9.5 9.5v3.5M6 13h7M.5 .5h4v3h-4zM2.5 3.500v9" strokeWidth="1.1" /></svg>
              <Gap w={8} />
              <svg width="16" height="13" viewBox="0 0 16 13" fill="none" stroke="#fff"><path d="M.5 4.5h2l3.5-3.500v11L2.500 8.500h-2z" /><path d="M8 4.500c.8 1 .8 3 0 4M10 3c1.600 2 1.600 5 0 7" /><path d="M12.500 1.500c2.500 3 2.500 7 0 10" stroke="#8d8583" /></svg>
              <Lang>ENG</Lang>
              <Clock><div>7:24 PM</div><div>18/03/2025</div></Clock>
              <svg width="16" height="16" viewBox="0 0 16 16" fill="none" stroke="#fff" strokeWidth="1.3"><path d="M.7 .7h14.600v11.500h-5L8 14.800l-2.300-2.600h-5z" /></svg>
              <PeekLine />
            </Tray>
          </Taskbar>
        </Window>
      </Frame>
    </>
  );
}
